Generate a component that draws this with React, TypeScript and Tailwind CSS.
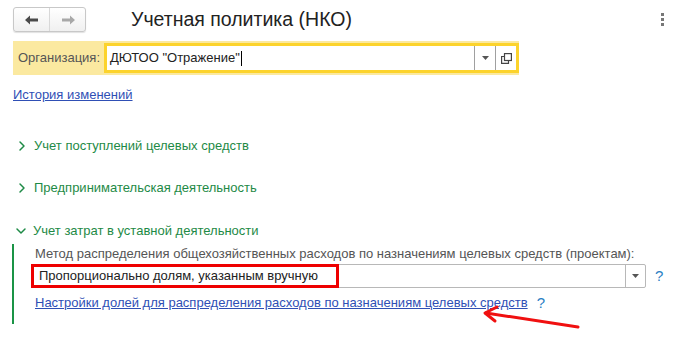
import { ChevronRight, ChevronDown } from "lucide-react";

function NavButtons() {
    return (
        <div className="flex h-[25px] w-[73px] rounded-[3px] border border-[#c8c8c8] bg-gradient-to-b from-white to-[#f0f0f0] shadow-[0_1px_1px_rgba(0,0,0,0.12)]">
            <div className="flex flex-1 items-center justify-center border-r border-[#d8d8d8]">
                <svg width="14" height="10" viewBox="0 0 14 10">
                    <path d="M0 5 L5 0.5 V3.5 H13 V6.5 H5 V9.5 Z" fill="#4a4a4a" />
                </svg>
            </div>
            <div className="flex flex-1 items-center justify-center">
                <svg width="14" height="10" viewBox="0 0 14 10">
                    <path d="M14 5 L9 0.5 V3.5 H1 V6.5 H9 V9.5 Z" fill="#a8a8a8" />
                </svg>
            </div>
        </div>
    );
}

function Caret() {
    return (
        <svg width="7" height="4" viewBox="0 0 7 4">
            <path d="M0 0 H7 L3.5 4 Z" fill="#555" />
        </svg>
    );
}

export default function App() {
    return (
        <div className="relative h-[339px] w-[679px] bg-white text-[13px] leading-[16px] text-[#404040]" style={{ fontFamily: '"Liberation Sans", Arial, sans-serif' }}>
            {/* header */}
            <div className="flex items-center pl-[13px] pt-[7px]">
                <NavButtons />
                <div className="ml-[45px] text-[19.5px] leading-[25px] text-[#222]">Учетная политика (НКО)</div>
                <div className="ml-auto mr-[15px] flex flex-col gap-[2px]">
                    <span className="h-[3px] w-[3px] bg-[#777]" />
                    <span className="h-[3px] w-[3px] bg-[#777]" />
                    <span className="h-[3px] w-[3px] bg-[#777]" />
                </div>
            </div>

            {/* organization */}
            <div className="ml-[13px] mt-[9px] flex h-[34px] w-[506px] items-center bg-[#fbe9a0] pl-[5px]">
                <span className="text-[#555]">Организация:</span>
                <div className="ml-[4px] flex h-[30px] flex-1 items-center border-[3px] border-[#fcd32c] bg-white">
                    <span className="ml-[3px] text-[#222]">ДЮТОО "Отражение"</span>
                    <span className="ml-px h-[15px] w-px bg-black" />
                    <div className="ml-auto flex h-full items-center">
                        <div className="flex h-full w-[21px] items-center justify-center border-l border-[#a0a0a0]">
                            <Caret />
                        </div>
                        <div className="flex h-full w-[21px] items-center justify-center border-l border-[#a0a0a0]">
                            <svg width="11" height="11" viewBox="0 0 11 11" fill="none" stroke="#444" strokeWidth="1.2">
                                <rect x="3.5" y="0.6" width="6.9" height="6.9" />
                                <path d="M3.5 3.5 H0.6 V10.4 H7.5 V7.5" />
                            </svg>
                        </div>
                    </div>
                </div>
            </div>

            <div className="ml-[13px] mt-[12px]">
                <a className="text-[#2f4fb5] underline">История изменений</a>
            </div>

            {/* groups */}
            <div className="ml-[14px] mt-[35px] flex items-center gap-[4px] text-[#1e8a46]">
                <ChevronRight size={16} strokeWidth={2.2} className="text-[#1e8a46]" />
                <span>Учет поступлений целевых средств</span>
            </div>
            <div className="ml-[14px] mt-[26px] flex items-center gap-[4px] text-[#1e8a46]">
                <ChevronRight size={16} strokeWidth={2.2} className="text-[#1e8a46]" />
                <span>Предпринимательская деятельность</span>
            </div>
            <div className="ml-[13px] mt-[27px] flex items-center gap-[4px] text-[#1e8a46]">
                <ChevronDown size={16} strokeWidth={2.2} className="text-[#1e8a46]" />
                <span>Учет затрат в уставной деятельности</span>
            </div>

            <div className="ml-[12px] mt-[5px] flex border-l-2 border-[#1a9446] pb-[13px] pl-[17px]">
                <div className="flex flex-col">
                    <div className="ml-[4px] mt-[2px] text-[#555]">
                        Метод распределения общехозяйственных расходов по назначениям целевых средств (проектам):
                    </div>
                    <div className="mt-[2px] flex items-center">
                        <div className="relative flex h-[24px] w-[615px] items-center rounded-[2px] border border-[#b8b8b8] bg-white">
                            <span className="ml-[7px] text-[#222]">Пропорционально долям, указанным вручную</span>
                            <div className="ml-auto flex h-full w-[20px] items-center justify-center border-l border-[#b8b8b8]">
                                <Caret />
                            </div>
                            <div className="absolute left-[-1px] top-[-1px] h-[24px] w-[308px] border-[3px] border-[#ee0000]" />
                        </div>
                        <span className="ml-[9px] text-[15px] text-[#2a7fc4]">?</span>
                    </div>
                    <div className="ml-[4px] mt-[7px] flex items-center">
                        <a className="text-[#2f4fb5] underline">Настройки долей для распределения расходов по назначениям целевых средств</a>
                        <span className="ml-[9px] text-[15px] text-[#2a7fc4]">?</span>
                    </div>
                </div>
            </div>

            {/* red arrow annotation */}
            <svg className="absolute left-[480px] top-[300px]" width="104" height="32" viewBox="0 0 104 32">
                <path d="M98 27 L6 13" stroke="#f01010" strokeWidth="3" strokeLinecap="round" />
                <path d="M17 7 L5 13 L15 21" fill="none" stroke="#f01010" strokeWidth="3" strokeLinecap="round" strokeLinejoin="round" />
            </svg>
        </div>
    );
}
